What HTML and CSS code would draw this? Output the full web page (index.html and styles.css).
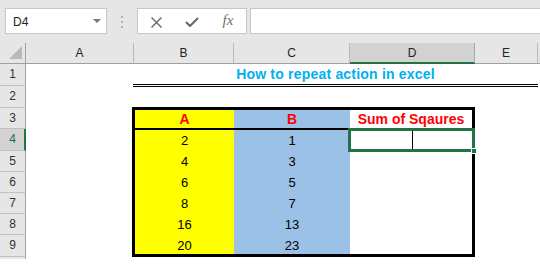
FILE: index.html
```html
<!DOCTYPE html>
<html>
<head>
<meta charset="utf-8">
<link rel="stylesheet" href="styles.css">
</head>
<body>
<div class="toolbar">
  <div class="namebox"><span class="ref">D4</span><span class="caret"></span></div>
  <div class="grip"><i></i><i></i><i></i></div>
  <div class="fbtns">
    <span class="fbtn"><svg width="11" height="11" viewBox="0 0 11 11"><path d="M0.5 0.5L10.5 10.5M10.5 0.5L0.5 10.5" stroke="#707070" stroke-width="1.5" fill="none"/></svg></span>
    <span class="fbtn"><svg width="14" height="10" viewBox="0 0 14 10"><path d="M1 5L5 9L13 1" stroke="#666" stroke-width="2" fill="none"/></svg></span>
    <span class="fbtn fx">fx</span>
  </div>
  <div class="formula"></div>
</div>
<div class="sheet">
  <div class="ch corner"><svg width="26" height="20" viewBox="0 0 26 20"><polygon points="22,3 22,16 9,16" fill="#b9b9b9"/></svg></div>
  <div class="ch">A</div>
  <div class="ch">B</div>
  <div class="ch">C</div>
  <div class="ch sel">D</div>
  <div class="ch">E</div>
  <div class="ch edge"></div>

  <div class="rh">1</div>
  <div class="title">How to repeat action in excel</div>
  <div class="rh">2</div>
  <div class="rh">3</div>
  <div class="tbl">
    <div class="th yellow">A</div>
    <div class="th blue">B</div>
    <div class="th">Sum of Sqaures</div>
    <div class="td yellow">2</div><div class="td blue">1</div><div class="td"></div>
    <div class="td yellow">4</div><div class="td blue">3</div><div class="td"></div>
    <div class="td yellow">6</div><div class="td blue">5</div><div class="td"></div>
    <div class="td yellow">8</div><div class="td blue">7</div><div class="td"></div>
    <div class="td yellow">16</div><div class="td blue">13</div><div class="td"></div>
    <div class="td yellow last">20</div><div class="td blue last">23</div><div class="td last"></div>
  </div>
  <div class="rh sel">4</div>
  <div class="rh">5</div>
  <div class="rh">6</div>
  <div class="rh">7</div>
  <div class="rh">8</div>
  <div class="rh">9</div>
  <div class="rh stub"></div>

  <div class="selection"></div>
  <div class="cursor"></div>
  <div class="handle"></div>
</div>
</body>
</html>
```

FILE: styles.css
```css
* { box-sizing: border-box; }
body {
  margin: 0;
  width: 540px;
  height: 267px;
  overflow: hidden;
  background: #fff;
  font-family: "Liberation Sans", Arial, sans-serif;
}
.toolbar {
  height: 43px;
  background: #e6e6e6;
  display: flex;
  align-items: flex-start;
  padding: 8px 0 0 5px;
}
.namebox {
  width: 102px;
  height: 26px;
  background: #fff;
  border: 1px solid #c6c6c6;
  display: flex;
  align-items: center;
  justify-content: space-between;
  padding: 2px 5px 0 7px;
  font-size: 12px;
  color: #222;
}
.caret {
  width: 0;
  height: 0;
  border-left: 4px solid transparent;
  border-right: 4px solid transparent;
  border-top: 4px solid #777;
  margin-top: -3px;
}
.grip {
  display: flex;
  flex-direction: column;
  gap: 3px;
  margin: 8px 0 0 14px;
}
.grip i {
  display: block;
  width: 2px;
  height: 2px;
  background: #b3b3b3;
}
.fbtns {
  margin-left: 14px;
  width: 110px;
  height: 26px;
  background: #fff;
  border: 1px solid #c6c6c6;
  display: flex;
  align-items: center;
  padding-top: 2px;
}
.fbtn {
  width: 36px;
  display: flex;
  justify-content: center;
  align-items: center;
}
.fx {
  font-family: "Liberation Serif", serif;
  font-style: italic;
  font-size: 15px;
  color: #707070;
  margin-top: -3px;
}
.formula {
  margin-left: 3px;
  flex: 1;
  height: 26px;
  background: #fff;
  border: 1px solid #c6c6c6;
  border-right: none;
}
.sheet {
  position: relative;
  display: grid;
  grid-template-columns: 26px 108px 100px 116px 125px 63px 2px;
  grid-template-rows: 21px 22px 22px 21px 22px 21px 21px 21px 21px 22px 10px;
}
.ch {
  background: #e6e6e6;
  border-right: 1px solid #b9b9b9;
  border-bottom: 1px solid #a0a0a0;
  text-align: center;
  font-size: 12px;
  line-height: 19px;
  padding-top: 1px;
  color: #222;
}
.ch.corner { padding: 0; border-right-color: #a0a0a0; }
.ch.corner svg { display: block; margin-top: 0; }
.ch.sel {
  background: #d2d2d2;
  border-bottom: 2px solid #217346;
  border-right-color: #a8a8a8;
}
.ch.edge { border-right: none; }
.rh {
  grid-column: 1;
  background: #e6e6e6;
  border-right: 1px solid #a0a0a0;
  border-bottom: 1px solid #c0c0c0;
  text-align: center;
  font-size: 12px;
  line-height: 21px;
  color: #333;
}
.rh.sel {
  background: #d2d2d2;
  border-right: 2px solid #217346;
  color: #217346;
  padding-left: 1px;
}
.rh.stub {
  align-self: start;
  height: 2px;
  border-bottom: none;
}
.title {
  grid-column: 3 / span 4;
  margin: 0 0 -1px -1px;
  border-bottom: 3px double #000;
  text-align: center;
  font-weight: bold;
  font-size: 14px;
  letter-spacing: 0.2px;
  line-height: 20px;
  padding-top: 0;
  color: #00b0f0;
}
.tbl {
  grid-column: 3 / span 3;
  grid-row: span 7;
  margin: -1px 0 0 -2px;
  border: 3px solid #000;
  display: grid;
  grid-template-columns: 99px 116px 1fr;
  grid-template-rows: 20px 21px 21px 21px 21px 21px 19px;
}
.th {
  border-bottom: 2px solid #000;
  text-align: center;
  font-weight: bold;
  font-size: 14px;
  line-height: 18px;
  color: #ff0000;
}
.td {
  text-align: center;
  font-size: 13px;
  line-height: 21px;
  color: #000;
}
.yellow { background: #ffff00; }
.blue { background: #9bc2e6; }
.selection {
  position: absolute;
  left: 348px;
  top: 85px;
  width: 127px;
  height: 24px;
  border: 3px solid #217346;
}
.cursor {
  position: absolute;
  left: 412px;
  top: 88px;
  width: 1px;
  height: 18px;
  background: #000;
}
.handle {
  position: absolute;
  left: 471px;
  top: 105px;
  width: 6px;
  height: 6px;
  background: #217346;
  border: 1px solid #fff;
}
```
